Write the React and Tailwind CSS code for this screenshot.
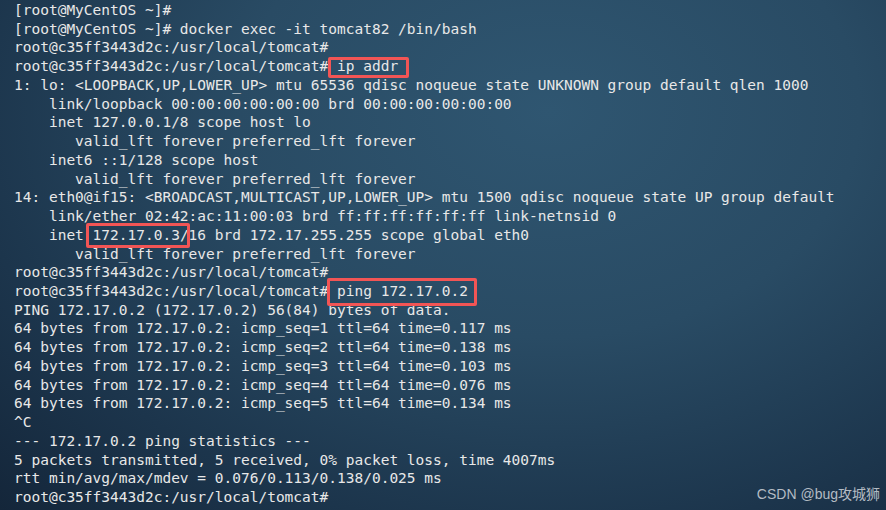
const lines = [
  '[root@MyCentOS ~]#',
  '[root@MyCentOS ~]# docker exec -it tomcat82 /bin/bash',
  'root@c35ff3443d2c:/usr/local/tomcat#',
  'IPADDR',
  '1: lo: <LOOPBACK,UP,LOWER_UP> mtu 65536 qdisc noqueue state UNKNOWN group default qlen 1000',
  '    link/loopback 00:00:00:00:00:00 brd 00:00:00:00:00:00',
  '    inet 127.0.0.1/8 scope host lo',
  '       valid_lft forever preferred_lft forever',
  '    inet6 ::1/128 scope host',
  '       valid_lft forever preferred_lft forever',
  '14: eth0@if15: <BROADCAST,MULTICAST,UP,LOWER_UP> mtu 1500 qdisc noqueue state UP group default',
  '    link/ether 02:42:ac:11:00:03 brd ff:ff:ff:ff:ff:ff link-netnsid 0',
  'INET',
  '       valid_lft forever preferred_lft forever',
  'root@c35ff3443d2c:/usr/local/tomcat#',
  'PING',
  'PING 172.17.0.2 (172.17.0.2) 56(84) bytes of data.',
  '64 bytes from 172.17.0.2: icmp_seq=1 ttl=64 time=0.117 ms',
  '64 bytes from 172.17.0.2: icmp_seq=2 ttl=64 time=0.138 ms',
  '64 bytes from 172.17.0.2: icmp_seq=3 ttl=64 time=0.103 ms',
  '64 bytes from 172.17.0.2: icmp_seq=4 ttl=64 time=0.076 ms',
  '64 bytes from 172.17.0.2: icmp_seq=5 ttl=64 time=0.134 ms',
  '^C',
  '--- 172.17.0.2 ping statistics ---',
  '5 packets transmitted, 5 received, 0% packet loss, time 4007ms',
  'rtt min/avg/max/mdev = 0.076/0.113/0.138/0.025 ms',
  'root@c35ff3443d2c:/usr/local/tomcat#',
];

const prompt = 'root@c35ff3443d2c:/usr/local/tomcat#';

// red highlight box drawn over the marked text
const Mark = ({ children, box }) => (
  <span className="relative inline-block align-top">
    {children}
    <span className={`absolute border-[3px] border-[#f25555] rounded-[2px] ${box}`} />
  </span>
);

const Line = ({ text }) => {
  if (text === 'IPADDR') {
    return (
      <div>
        {prompt} <Mark box="-left-[9px] -right-[11px] top-[0px] -bottom-[2px]">ip addr</Mark>
      </div>
    );
  }
  if (text === 'INET') {
    return (
      <div>
        {'    inet '}
        <Mark box="-left-[7px] -right-[1px] -top-[3px] -bottom-[3px]">172.17.0.3/</Mark>
        {'16 brd 172.17.255.255 scope global eth0'}
      </div>
    );
  }
  if (text === 'PING') {
    return (
      <div>
        {prompt} <Mark box="-left-[10px] -right-[9px] -top-[4px] -bottom-[5px]">ping 172.17.0.2</Mark>
      </div>
    );
  }
  return <div>{text || '\u00a0'}</div>;
};

export default function App() {
  return (
    <div className="relative w-[886px] h-[510px] overflow-hidden bg-[radial-gradient(ellipse_at_62%_22%,#2f5671_0%,#294b64_40%,#1c354c_75%,#14263a_100%)]">
      <div className="pl-[14px] pt-[1px] font-['DejaVu_Sans_Mono',monospace] text-[14.5px] leading-[18.73px] text-[#e8e8e8] whitespace-pre">
        {lines.map((l, i) => (
          <Line key={i} text={l} />
        ))}
      </div>
      <div className="absolute right-[6px] bottom-[5px] font-['Liberation_Sans','Noto_Sans_CJK_SC',sans-serif] text-[14px] text-[#b4bcc4]">
        CSDN @bug攻城狮
      </div>
    </div>
  );
}
